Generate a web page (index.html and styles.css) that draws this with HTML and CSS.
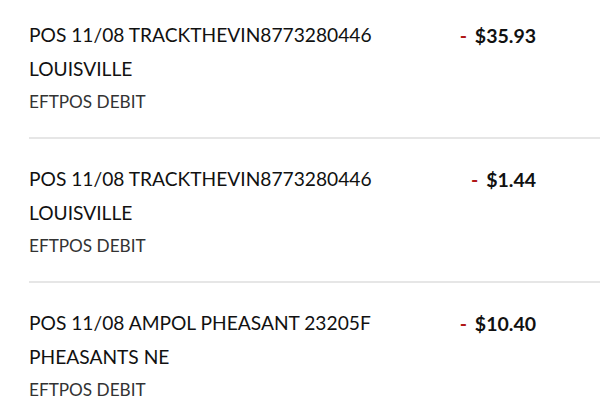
FILE: index.html
```html
<!DOCTYPE html>
<html lang="en">
<head>
<meta charset="utf-8">
<link rel="stylesheet" href="styles.css">
</head>
<body>
<ul class="txn-list">
  <li class="txn">
    <div class="txn-info">
      <div class="txn-title">POS 11/08 TRACKTHEVIN8773280446 LOUISVILLE</div>
      <div class="txn-type">EFTPOS DEBIT</div>
    </div>
    <div class="txn-amount"><span class="sign">-</span> $35.93</div>
  </li>
  <li class="txn">
    <div class="txn-info">
      <div class="txn-title">POS 11/08 TRACKTHEVIN8773280446 LOUISVILLE</div>
      <div class="txn-type">EFTPOS DEBIT</div>
    </div>
    <div class="txn-amount"><span class="sign">-</span> $1.44</div>
  </li>
  <li class="txn">
    <div class="txn-info">
      <div class="txn-title">POS 11/08 AMPOL PHEASANT 23205F PHEASANTS NE</div>
      <div class="txn-type">EFTPOS DEBIT</div>
    </div>
    <div class="txn-amount"><span class="sign">-</span> $10.40</div>
  </li>
</ul>
</body>
</html>
```
FILE: styles.css
```css
html, body {
  margin: 0;
  padding: 0;
  background: #ffffff;
}
body {
  font-family: "Lato", "Liberation Sans", sans-serif;
  color: #111111;
  overflow: hidden;
}
.txn-list {
  list-style: none;
  margin: -5px 0 0 0;
  padding: 0 0 0 29px;
}
.txn {
  display: flex;
  align-items: flex-start;
  padding: 23px 0 19px 0;
  border-bottom: 2px solid #e6e6e6;
}
.txn-info {
  width: 360px;
  flex: none;
}
.txn-title {
  font-size: 19.2px;
  line-height: 34px;
}
.txn-type {
  font-size: 17.2px;
  line-height: 32px;
  color: #333333;
}
.txn-amount {
  width: 147px;
  flex: none;
  text-align: right;
  font-size: 19.5px;
  font-weight: 700;
  line-height: 34px;
  padding-top: 1px;
}
.sign {
  color: #b01818;
  margin-right: 3px;
}
```
